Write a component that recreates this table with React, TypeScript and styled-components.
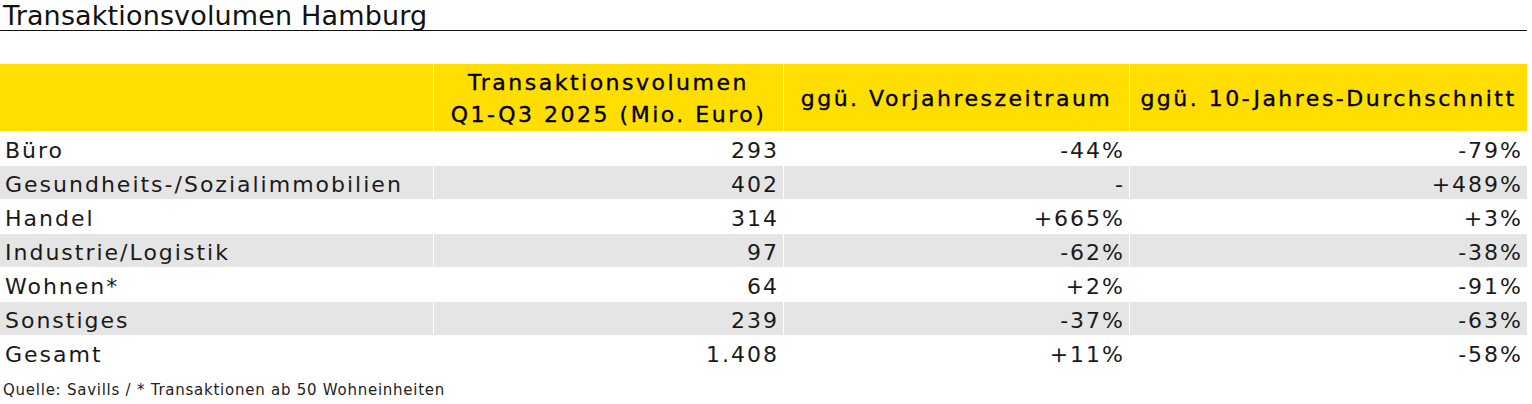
import styled, { createGlobalStyle } from 'styled-components';

const GlobalStyle = createGlobalStyle`
  html, body {
    margin: 0;
    padding: 0;
    background: #fff;
  }
  body {
    font-family: 'DejaVu Sans', 'Liberation Sans', sans-serif;
    color: #111;
  }
`;

interface Row {
  label: string;
  volume: string;
  prevYear: string;
  tenYear: string;
}

const rows: Row[] = [
  { label: 'Büro', volume: '293', prevYear: '-44%', tenYear: '-79%' },
  { label: 'Gesundheits-/Sozialimmobilien', volume: '402', prevYear: '-', tenYear: '+489%' },
  { label: 'Handel', volume: '314', prevYear: '+665%', tenYear: '+3%' },
  { label: 'Industrie/Logistik', volume: '97', prevYear: '-62%', tenYear: '-38%' },
  { label: 'Wohnen*', volume: '64', prevYear: '+2%', tenYear: '-91%' },
  { label: 'Sonstiges', volume: '239', prevYear: '-37%', tenYear: '-63%' },
  { label: 'Gesamt', volume: '1.408', prevYear: '+11%', tenYear: '-58%' },
];

export default function App() {
  return (
    <Page>
      <GlobalStyle />
      <Title>Transaktionsvolumen Hamburg</Title>
      <Table>
        <HeadCell />
        <HeadCell>
          Transaktionsvolumen
          <br />
          Q1-Q3 2025 (Mio. Euro)
        </HeadCell>
        <HeadCell>ggü. Vorjahreszeitraum</HeadCell>
        <HeadCell>ggü. 10-Jahres-Durchschnitt</HeadCell>
        {rows.map((r, i) => (
          <RowGroup key={r.label}>
            <Cell $shade={i % 2 === 1}>{r.label}</Cell>
            <Cell $shade={i % 2 === 1} $right>{r.volume}</Cell>
            <Cell $shade={i % 2 === 1} $right>{r.prevYear}</Cell>
            <Cell $shade={i % 2 === 1} $right>{r.tenYear}</Cell>
          </RowGroup>
        ))}
      </Table>
      <Source>Quelle: Savills / * Transaktionen ab 50 Wohneinheiten</Source>
    </Page>
  );
}

const Page = styled.div`
  width: 1532px;
  height: 404px;
  overflow: hidden;
`;

const Title = styled.div`
  width: 1527px;
  height: 31px;
  border-bottom: 1px solid #111;
  font-size: 27px;
  line-height: 32px;
  padding-left: 3px;
  box-sizing: border-box;
  letter-spacing: 0.15px;
  white-space: nowrap;
  overflow: hidden;
`;

const Table = styled.div`
  display: grid;
  grid-template-columns: 433px 350px 346px 398px;
  grid-template-rows: 67px;
  grid-auto-rows: 34px;
  margin-top: 33px;
  width: 1527px;
`;

const RowGroup = styled.div`
  display: contents;
`;

const HeadCell = styled.div`
  background: #ffde00;
  border-left: 1px solid #fff;
  &:first-child {
    border-left: none;
  }
  display: flex;
  align-items: center;
  justify-content: center;
  text-align: center;
  font-size: 22px;
  line-height: 32px;
  letter-spacing: 2.5px;
  color: #000;
  -webkit-text-stroke: 0.35px #000;
  padding: 3px 0 0;
  white-space: nowrap;
`;

const Cell = styled.div<{ $shade?: boolean; $right?: boolean }>`
  background: ${(p) => (p.$shade ? '#e5e5e5' : '#fff')};
  border-left: 1px solid #fff;
  &:first-child {
    border-left: none;
  }
  display: flex;
  align-items: center;
  justify-content: ${(p) => (p.$right ? 'flex-end' : 'flex-start')};
  font-size: 22px;
  letter-spacing: 2px;
  color: #1a1a1a;
  padding: 3px 4px 0 5px;
  margin-top: 1px;
  white-space: nowrap;
`;

const Source = styled.div`
  font-size: 15px;
  letter-spacing: 0.75px;
  padding-left: 3px;
  margin-top: 12px;
  color: #222;
`;
